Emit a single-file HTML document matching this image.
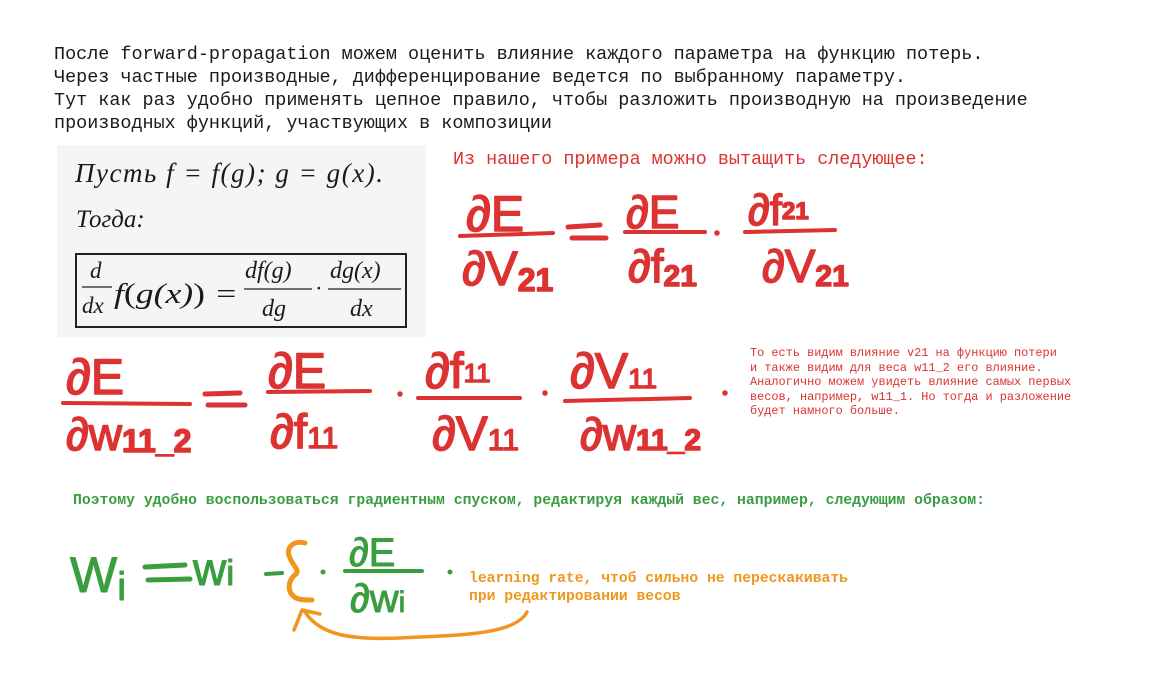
<!DOCTYPE html>
<html><head><meta charset="utf-8"><style>
html,body{margin:0;padding:0;background:#fff;width:1162px;height:694px;overflow:hidden}
svg{display:block}
.m{font-family:"Liberation Mono",monospace}
.h{font-family:"Liberation Sans",sans-serif;stroke-linejoin:round;stroke-linecap:round}
.r{fill:#dc3232;stroke:#dc3232}
.g{fill:#3a9e40;stroke:#3a9e40}
.o{fill:#f0961e;stroke:#f0961e}
.s{font-family:"Liberation Serif",serif;font-style:italic;fill:#1a1a1a}
</style></head><body>
<svg width="1162" height="694" viewBox="0 0 1162 694" xmlns="http://www.w3.org/2000/svg">
<g class="m" font-size="18.45" fill="#1a1a1a">
<text x="54" y="59">После forward-propagation можем оценить влияние каждого параметра на функцию потерь.</text>
<text x="54" y="82">Через частные производные, дифференцирование ведется по выбранному параметру.</text>
<text x="54" y="105">Тут как раз удобно применять цепное правило, чтобы разложить производную на произведение</text>
<text x="54" y="128">производных функций, участвующих в композиции</text>
</g>
<rect x="57" y="145" width="369" height="192" fill="#f5f5f5"/>
<g class="s">
<text x="75" y="182" font-size="27" textLength="308">Пусть f = f(g); g = g(x).</text>
<text x="76" y="227" font-size="25">Тогда:</text>
<rect x="76" y="254" width="330" height="73" fill="none" stroke="#222" stroke-width="2"/>
<text x="90" y="278" font-size="23">d</text>
<line x1="82" y1="287" x2="112" y2="287" stroke="#222" stroke-width="1.3"/>
<text x="82" y="313" font-size="23">dx</text>
<text x="114" y="303" font-size="28" textLength="124" lengthAdjust="spacingAndGlyphs">f<tspan font-style="normal">(</tspan>g(x)<tspan font-style="normal">)</tspan> =</text>
<text x="245" y="278" font-size="24">df(g)</text>
<line x1="244" y1="289" x2="312" y2="289" stroke="#222" stroke-width="1.3"/>
<text x="262" y="316" font-size="24">dg</text>
<text x="315" y="296" font-size="23" font-style="normal">·</text>
<text x="330" y="278" font-size="24">dg(x)</text>
<line x1="328" y1="289" x2="401" y2="289" stroke="#222" stroke-width="1.3"/>
<text x="350" y="316" font-size="24">dx</text>
</g>
<text x="453" y="164" class="m" font-size="18.4" fill="#dc3232">Из нашего примера можно вытащить следующее:</text>
<g class="h r" stroke-width="1.5">
<text x="466" y="231" font-size="50">∂E</text>
<line x1="460" y1="236" x2="553" y2="233" stroke-width="4"/>
<text x="462" y="285" font-size="48">∂V<tspan font-size="32" dy="6" font-weight="bold">21</tspan></text>
<line x1="568" y1="227" x2="600" y2="225" stroke-width="5"/>
<line x1="572" y1="238" x2="606" y2="238" stroke-width="5"/>
<text x="626" y="228" font-size="46">∂E</text>
<line x1="625" y1="232" x2="705" y2="232" stroke-width="4"/>
<text x="628" y="282" font-size="46">∂f<tspan font-size="30" dy="4" font-weight="bold">21</tspan></text>
<circle cx="717" cy="233" r="2"/>
<text x="748" y="225" font-size="44">∂f<tspan font-size="24" dy="-6" font-weight="bold">21</tspan></text>
<line x1="745" y1="232" x2="835" y2="230" stroke-width="4"/>
<text x="762" y="282" font-size="46">∂V<tspan font-size="30" dy="4" font-weight="bold">21</tspan></text>
<text x="66" y="394" font-size="50">∂E</text>
<line x1="63" y1="403" x2="190" y2="404" stroke-width="4"/>
<text x="66" y="450" font-size="46">∂w<tspan font-size="32" dy="2" font-weight="bold">11_2</tspan></text>
<line x1="205" y1="394" x2="240" y2="393" stroke-width="5"/>
<line x1="208" y1="405" x2="245" y2="405" stroke-width="5"/>
<text x="268" y="388" font-size="50">∂E</text>
<line x1="268" y1="392" x2="370" y2="391" stroke-width="4"/>
<text x="270" y="448" font-size="48">∂f<tspan font-size="30">11</tspan></text>
<circle cx="400" cy="394" r="2"/>
<text x="425" y="388" font-size="50">∂f<tspan font-size="26" dy="-6">11</tspan></text>
<line x1="418" y1="398" x2="520" y2="398" stroke-width="4"/>
<text x="432" y="450" font-size="48">∂V<tspan font-size="30">11</tspan></text>
<circle cx="545" cy="393" r="2"/>
<text x="570" y="388" font-size="50">∂V<tspan font-size="28">11</tspan></text>
<line x1="565" y1="401" x2="690" y2="398" stroke-width="4"/>
<text x="580" y="450" font-size="46">∂w<tspan font-size="30" font-weight="bold">11_2</tspan></text>
<circle cx="725" cy="393" r="2"/>
</g>
<g class="m" font-size="11.9" fill="#dc3232">
<text x="750" y="356">То есть видим влияние v21 на функцию потери</text>
<text x="750" y="371">и также видим для веса w11_2 его влияние.</text>
<text x="750" y="385">Аналогично можем увидеть влияние самых первых</text>
<text x="750" y="400">весов, например, w11_1. Но тогда и разложение</text>
<text x="750" y="414">будет намного больше.</text>
</g>
<text x="73" y="504" class="m" font-size="14.8" font-weight="bold" fill="#3a9e40" textLength="912">Поэтому удобно воспользоваться градиентным спуском, редактируя каждый вес, например, следующим образом:</text>
<g class="h g" stroke-width="1">
<text x="70" y="592" font-size="50" font-weight="normal">W<tspan font-size="40" dy="8">i</tspan></text>
<line x1="145" y1="567" x2="185" y2="565" stroke-width="5"/>
<line x1="148" y1="580" x2="190" y2="579" stroke-width="5"/>
<text x="193" y="585" font-size="46">w<tspan font-size="36">i</tspan></text>
<line x1="266" y1="574" x2="282" y2="573" stroke-width="4"/>
<circle cx="323" cy="572" r="2"/>
<text x="349" y="566" font-size="40">∂E</text>
<line x1="345" y1="571" x2="422" y2="571" stroke-width="4"/>
<text x="350" y="612" font-size="40">∂w<tspan font-size="30">i</tspan></text>
<circle cx="450" cy="572" r="2"/>
</g>
<path d="M305 543 C293 540 285 548 290 558 C293 566 300 570 296 574 C288 580 286 592 296 598 C300 600 306 600 312 600" fill="none" stroke="#f0961e" stroke-width="5" stroke-linecap="round"/>
<path d="M527 612 C515 635 460 635 400 638 C350 640 320 635 305 612 M294 630 L302 610 L320 614" fill="none" stroke="#f0961e" stroke-width="3.5" stroke-linecap="round" stroke-linejoin="round"/>
<g class="m" font-size="14.7" font-weight="bold" fill="#f0961e">
<text x="469" y="582">learning rate, чтоб сильно не перескакивать</text>
<text x="469" y="600">при редактировании весов</text>
</g>
</svg>
</body></html>
